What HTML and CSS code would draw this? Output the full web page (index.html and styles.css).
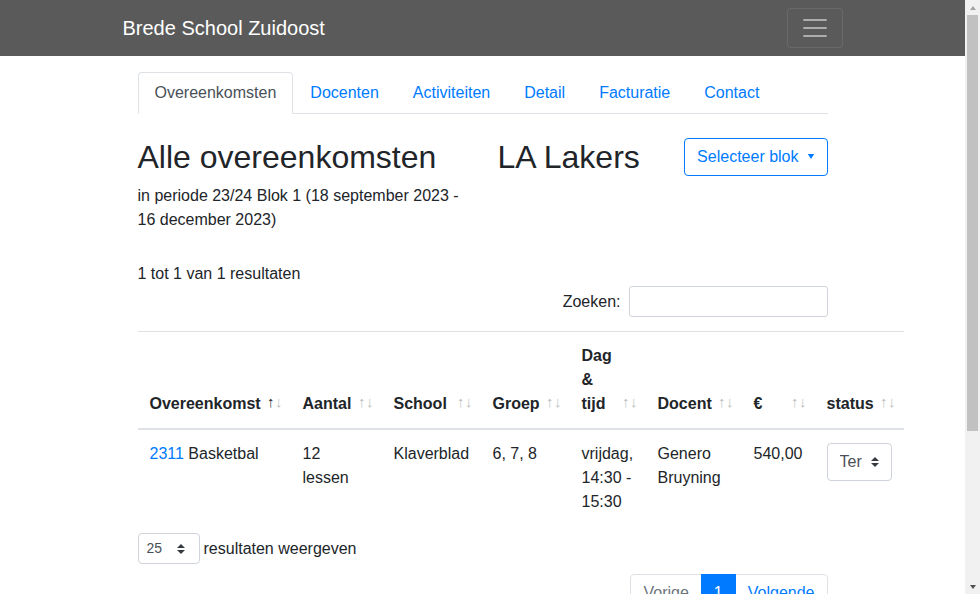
FILE: index.html
```html
<!DOCTYPE html>
<html lang="nl">
<head>
<meta charset="utf-8">
<title>Brede School Zuidoost</title>
<link rel="stylesheet" href="styles.css">
</head>
<body>
<div class="site">
<nav class="navbar">
  <div class="navbar-inner">
    <a class="brand" href="#">Brede School Zuidoost</a>
    <button class="toggler" type="button" aria-label="Menu">
      <svg width="30" height="30" viewBox="0 0 30 30"><path d="M4 7h22M4 15h22M4 23h22" stroke="rgba(255,255,255,0.5)" stroke-width="2" stroke-linecap="round" fill="none"/></svg>
    </button>
  </div>
</nav>

<main class="container">
  <ul class="tabs">
    <li><a class="tab active" href="#">Overeenkomsten</a></li>
    <li><a class="tab" href="#">Docenten</a></li>
    <li><a class="tab" href="#">Activiteiten</a></li>
    <li><a class="tab" href="#">Detail</a></li>
    <li><a class="tab" href="#">Facturatie</a></li>
    <li><a class="tab" href="#">Contact</a></li>
  </ul>

  <div class="head-row">
    <div class="head-col">
      <h2 class="title">Alle overeenkomsten</h2>
      <p class="period">in periode 23/24 Blok 1 (18 september 2023 - 16 december 2023)</p>
    </div>
    <div class="head-col head-right">
      <h2 class="title">LA Lakers</h2>
      <button class="btn-outline" type="button">Selecteer blok<span class="caret"></span></button>
    </div>
  </div>

  <div class="info">1 tot 1 van 1 resultaten</div>
  <div class="filter">
    <label class="filter-label">Zoeken:</label>
    <div class="search-input"></div>
  </div>

  <table class="data">
    <thead>
      <tr>
        <th class="w1 sort asc">Overeenkomst</th>
        <th class="w2 sort">Aantal</th>
        <th class="w3 sort">School</th>
        <th class="w4 sort">Groep</th>
        <th class="w5 sort">Dag &amp; tijd</th>
        <th class="w6 sort">Docent</th>
        <th class="w7 sort">€</th>
        <th class="w8 sort">status</th>
      </tr>
    </thead>
    <tbody>
      <tr>
        <td><a href="#" class="link">2311</a> Basketbal</td>
        <td>12 lessen</td>
        <td>Klaverblad</td>
        <td>6, 7, 8</td>
        <td>vrijdag, 14:30 - 15:30</td>
        <td>Genero Bruyning</td>
        <td>540,00</td>
        <td>
          <div class="select status-select"><span class="select-text">Ter</span>
            <svg class="select-arrow" width="8" height="10" viewBox="0 0 4 5"><path fill="#343a40" d="M2 0L0 2h4zm0 5L0 3h4z"/></svg>
          </div>
        </td>
      </tr>
    </tbody>
  </table>

  <div class="length">
    <div class="select length-select"><span class="select-text">25</span>
      <svg class="select-arrow" width="8" height="10" viewBox="0 0 4 5"><path fill="#343a40" d="M2 0L0 2h4zm0 5L0 3h4z"/></svg>
    </div>
    <span class="length-label">resultaten weergeven</span>
  </div>

  <div class="pager">
    <ul class="pagination">
      <li class="page-item disabled">Vorige</li>
      <li class="page-item current">1</li>
      <li class="page-item">Volgende</li>
    </ul>
  </div>
</main>
</div>

<div class="scrollbar" aria-hidden="true">
  <div class="sb-up"></div>
  <div class="sb-track"><div class="sb-thumb"></div></div>
  <div class="sb-down"></div>
</div>
</body>
</html>
```

FILE: styles.css
```css
* { box-sizing: border-box; }

html, body {
  margin: 0;
  padding: 0;
}

body {
  font-family: "Liberation Sans", Arial, sans-serif;
  font-size: 16px;
  line-height: 24px;
  color: #212529;
  background: #fff;
}

.site {
  margin-right: 15px;
}

a { text-decoration: none; }

.navbar {
  background: #5a5a5a;
  height: 56px;
}

.navbar-inner {
  width: 720px;
  margin: 0 auto;
  height: 56px;
  display: flex;
  align-items: center;
  justify-content: space-between;
}

.brand {
  color: #fff;
  font-size: 20px;
  line-height: 30px;
}

.toggler {
  width: 56px;
  height: 40px;
  border: 1px solid rgba(255,255,255,0.1);
  border-radius: 4px;
  background: transparent;
  padding: 0;
  display: flex;
  align-items: center;
  justify-content: center;
}

.container {
  width: 720px;
  margin: 0 auto;
  padding: 16px 15px 193px;
}

.tabs {
  list-style: none;
  margin: 0;
  padding: 0;
  display: flex;
  border-bottom: 1px solid #dee2e6;
}

.tabs li { margin-bottom: -1px; }

.tab {
  display: block;
  padding: 8px 16px;
  border: 1px solid transparent;
  border-radius: 4px 4px 0 0;
  color: #007bff;
  line-height: 24px;
}

.tab.active {
  color: #495057;
  background: #fff;
  border-color: #dee2e6 #dee2e6 #fff;
}

.head-row {
  display: flex;
  margin: 24px -15px 0;
}

.head-col {
  width: 360px;
  padding: 0 15px;
}

.head-right {
  display: flex;
  justify-content: space-between;
  align-items: flex-start;
}

.title {
  font-size: 32px;
  font-weight: 500;
  line-height: 38.4px;
  margin: 0 0 8px;
}

.period {
  margin: 0 0 16px;
}

.btn-outline {
  font-family: inherit;
  font-size: 16px;
  line-height: 24px;
  height: 38px;
  padding: 6px 12px;
  color: #007bff;
  background: #fff;
  border: 1px solid #007bff;
  border-radius: 4px;
  display: flex;
  align-items: center;
}

.caret {
  display: inline-block;
  margin-left: 8px;
  border-top: 5px solid #007bff;
  border-left: 4.5px solid transparent;
  border-right: 4.5px solid transparent;
  width: 0;
  height: 0;
  position: relative;
  top: -1px;
  transform: scaleX(0.8);
}

.info {
  margin-top: 14px;
}

.filter {
  display: flex;
  justify-content: flex-end;
  align-items: center;
}

.filter-label {
  margin-right: 8px;
}

.search-input {
  width: 199px;
  height: 31px;
  border: 1px solid #ced4da;
  border-radius: 3px;
}

.data {
  border-collapse: collapse;
  table-layout: fixed;
  width: 766px;
  margin-top: 14px;
}

.data th {
  position: relative;
  text-align: left;
  vertical-align: bottom;
  font-weight: bold;
  padding: 12px 30px 12px 12px;
  border-top: 1px solid #dee2e6;
  border-bottom: 2px solid #dee2e6;
}

.data th.sort::before,
.data th.sort::after {
  position: absolute;
  bottom: 14px;
  display: block;
  opacity: 0.3;
  font-weight: normal;
  font-size: 15px;
}

.data th.sort::before {
  content: "\2191";
  right: 16px;
}

.data th.sort::after {
  content: "\2193";
  right: 8px;
}

.data th.asc::before { opacity: 1; }

.data td {
  vertical-align: top;
  padding: 12px;
  border-top: 2px solid #dee2e6;
}

.w1 { width: 153px; }
.w2 { width: 91px; }
.w3 { width: 99px; }
.w4 { width: 89px; }
.w5 { width: 76px; }
.w6 { width: 96px; }
.w7 { width: 73px; }
.w8 { width: 89px; }

.link { color: #007bff; }

.select {
  position: relative;
  border: 1px solid #ced4da;
  border-radius: 4px;
  background: #fff;
  color: #495057;
  overflow: hidden;
  white-space: nowrap;
}

.status-select {
  width: 65px;
  height: 38px;
  margin-top: 1px;
  padding: 6px 28px 6px 12px;
}

.select-text {
  display: block;
  overflow: hidden;
}

.select-arrow {
  position: absolute;
  right: 12px;
  top: 50%;
  margin-top: -5px;
}

.length {
  display: flex;
  align-items: center;
  margin-top: 7px;
}

.length-select {
  width: 62px;
  height: 31px;
  font-size: 14px;
  line-height: 21px;
  padding: 4px 24px 4px 8px;
}

.length-select .select-arrow { right: 14px; }

.length-label {
  margin-left: 4px;
}

.pager {
  display: flex;
  justify-content: flex-end;
  margin-top: 10px;
}

.pagination {
  list-style: none;
  margin: 0;
  padding: 0;
  display: flex;
}

.page-item {
  padding: 8px 12px;
  line-height: 20px;
  border: 1px solid #dee2e6;
  margin-left: -1px;
  color: #007bff;
  background: #fff;
}

.page-item:first-child {
  border-radius: 4px 0 0 4px;
  margin-left: 0;
}

.page-item:last-child { border-radius: 0 4px 4px 0; }

.page-item.disabled { color: #6c757d; }

.page-item.current {
  background: #007bff;
  border-color: #007bff;
  color: #fff;
  position: relative;
}

/* simulated classic browser scrollbar */
.scrollbar {
  position: fixed;
  top: 0;
  right: 0;
  width: 15px;
  height: 594px;
  background: #f1f1f1;
  display: flex;
  flex-direction: column;
}

.sb-up, .sb-down {
  height: 15px;
  display: flex;
  align-items: center;
  justify-content: center;
}

.sb-up::before {
  content: "";
  border-bottom: 4px solid #a3a3a3;
  border-left: 3.5px solid transparent;
  border-right: 3.5px solid transparent;
}

.sb-down::before {
  content: "";
  border-top: 4px solid #505050;
  border-left: 3.5px solid transparent;
  border-right: 3.5px solid transparent;
}

.sb-track {
  flex: 1;
  padding: 0 2px;
}

.sb-thumb {
  height: 416px;
  background: #c1c1c1;
}
```
